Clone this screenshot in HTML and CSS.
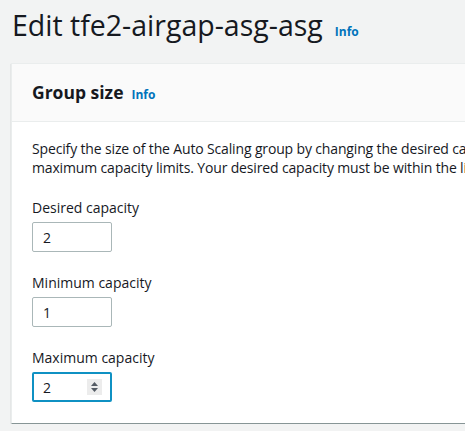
FILE: index.html
```html
<!DOCTYPE html>
<html>
<head>
<meta charset="utf-8">
<link rel="stylesheet" href="styles.css">
</head>
<body>
<div class="page">
  <div class="title-row">
    <h1 class="title">Edit tfe2-airgap-asg-asg</h1>
    <a class="info info-title">Info</a>
  </div>
  <div class="card">
    <div class="card-header">
      <h2 class="card-title">Group size</h2>
      <a class="info info-card">Info</a>
    </div>
    <div class="card-body">
      <p class="desc">Specify the size of the Auto Scaling group by changing the desired capacity. You can also specify minimum and<br>maximum capacity limits. Your desired capacity must be within the limit range.</p>
      <div class="field">
        <div class="label">Desired capacity</div>
        <div class="input"><span class="value">2</span></div>
      </div>
      <div class="field">
        <div class="label">Minimum capacity</div>
        <div class="input"><span class="value">1</span></div>
      </div>
      <div class="field">
        <div class="label">Maximum capacity</div>
        <div class="input focused"><span class="value">2</span>
          <span class="spinner">
            <svg width="15" height="16" viewBox="0 0 15 16"><path d="M7.5 3 L11 7 L4 7 Z" fill="#545b64"/><path d="M7.5 13 L11 9 L4 9 Z" fill="#545b64"/></svg>
          </span>
        </div>
      </div>
    </div>
  </div>
</div>
</body>
</html>
```

FILE: styles.css
```css
html, body {
  margin: 0;
  padding: 0;
  background: #f2f3f3;
  overflow: hidden;
}
.page {
  width: 560px;
  font-family: "Open Sans", "Noto Sans", sans-serif;
  color: #16191f;
}
.title-row {
  display: flex;
  align-items: baseline;
  padding: 6px 0 0 12px;
  height: 57px;
  box-sizing: border-box;
}
.title {
  margin: 0;
  font-size: 28.5px;
  font-weight: 400;
  line-height: 38px;
  letter-spacing: 0;
}
.info {
  color: #0073bb;
  font-weight: 700;
  font-size: 12px;
  text-decoration: none;
}
.info-title {
  margin-left: 12px;
}
.card {
  margin: 6px 0 0 11px;
  background: #fff;
  border: 1px solid #eaeded;
  border-bottom: 1px solid #879596;
  box-shadow: 0 1px 1px rgba(0,28,36,0.3);
}
.card-header {
  background: #fafafa;
  border-bottom: 1px solid #eaeded;
  display: flex;
  align-items: baseline;
  height: 58px;
  box-sizing: border-box;
  padding: 16px 20px 0 20px;
}
.card-title {
  margin: 0;
  font-size: 17.5px;
  font-weight: 700;
  line-height: 24px;
}
.info-card {
  margin-left: 8px;
}
.card-body {
  padding: 17px 20px 21px 20px;
}
.desc {
  margin: 0;
  font-size: 14px;
  line-height: 19px;
  letter-spacing: -0.15px;
  white-space: nowrap;
}
.field {
  margin-top: 21px;
}
.label {
  font-size: 14px;
  line-height: 20px;
  margin-bottom: 4px;
}
.input {
  width: 80px;
  height: 30px;
  box-sizing: border-box;
  border: 1px solid #aab7b8;
  border-radius: 2px;
  display: flex;
  align-items: center;
  padding-left: 10px;
  font-size: 14px;
  background: #fff;
}
.input.focused {
  border: 2px solid #0f91c3;
  padding-left: 9px;
  padding-right: 8px;
}
.value {
  flex: 1;
}
.spinner {
  display: flex;
  width: 15px;
  height: 16px;
  background: #ececec;
}
```
